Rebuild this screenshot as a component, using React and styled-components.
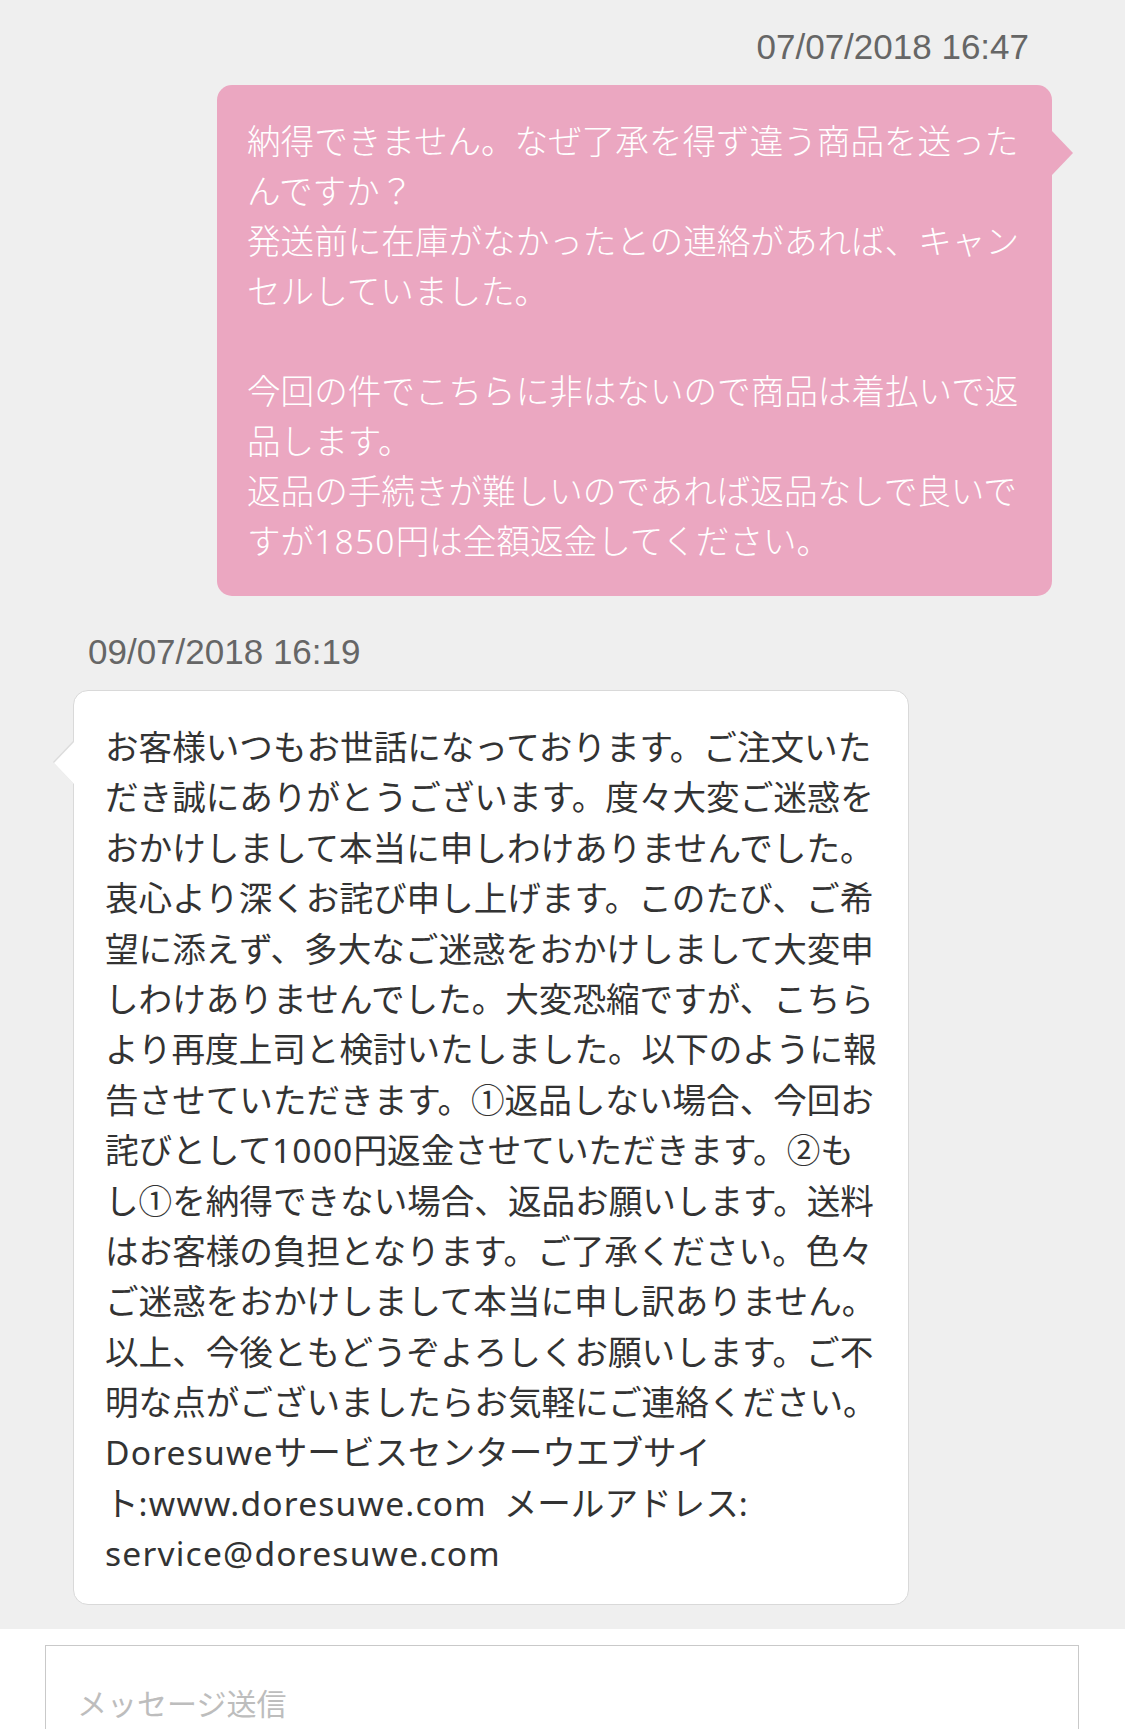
import styled, { createGlobalStyle } from "styled-components";

const GlobalStyle = createGlobalStyle`
  html, body {
    margin: 0;
    padding: 0;
    background: #efefef;
  }
  * {
    box-sizing: border-box;
  }
`;

const messages = [
  {
    out: true,
    time: "07/07/2018 16:47",
    lines: [
      "納得できません。なぜ了承を得ず違う商品を送った",
      "んですか？",
      "発送前に在庫がなかったとの連絡があれば、キャン",
      "セルしていました。",
      "",
      "今回の件でこちらに非はないので商品は着払いで返",
      "品します。",
      "返品の手続きが難しいのであれば返品なしで良いで",
      "すが1850円は全額返金してください。",
    ],
  },
  {
    out: false,
    time: "09/07/2018 16:19",
    lines: [
      "お客様いつもお世話になっております。ご注文いた",
      "だき誠にありがとうございます。度々大変ご迷惑を",
      "おかけしまして本当に申しわけありませんでした。",
      "衷心より深くお詫び申し上げます。このたび、ご希",
      "望に添えず、多大なご迷惑をおかけしまして大変申",
      "しわけありませんでした。大変恐縮ですが、こちら",
      "より再度上司と検討いたしました。以下のように報",
      "告させていただきます。①返品しない場合、今回お",
      "詫びとして1000円返金させていただきます。②も",
      "し①を納得できない場合、返品お願いします。送料",
      "はお客様の負担となります。ご了承ください。色々",
      "ご迷惑をおかけしまして本当に申し訳ありません。",
      "以上、今後ともどうぞよろしくお願いします。ご不",
      "明な点がございましたらお気軽にご連絡ください。",
      "Doresuweサービスセンターウエブサイ",
      "ト:www.doresuwe.com\u2002メールアドレス:",
      "service@doresuwe.com",
    ],
  },
];

// latin runs are set a little wider, like the phone's system font
const renderLine = (line) =>
  line.split(/([A-Za-z0-9@.:]+)/).map((part, i) =>
    /^[A-Za-z0-9@.:]+$/.test(part) ? <Latin key={i}>{part}</Latin> : part
  );

const App = () => {
  return (
    <Page>
      <GlobalStyle />
      <Thread>
        {messages.map((msg, idx) => (
          <Group key={idx} $out={msg.out} $first={idx === 0}>
            <Stamp $out={msg.out}>{msg.time}</Stamp>
            <Bubble $out={msg.out}>
              {msg.lines.map((line, i) => (
                <Line key={i} $out={msg.out}>
                  {line ? renderLine(line) : "\u00a0"}
                </Line>
              ))}
            </Bubble>
          </Group>
        ))}
      </Thread>
      <Footer>
        <Input placeholder="メッセージ送信" />
      </Footer>
    </Page>
  );
};

const Page = styled.div`
  height: 100vh;
  display: flex;
  flex-direction: column;
  overflow: hidden;
  font-family: "Noto Sans CJK JP", "Noto Sans", sans-serif;
`;

const Thread = styled.main`
  display: flex;
  flex-direction: column;
  padding: 27px 0 24px;
`;

const Group = styled.section`
  display: flex;
  flex-direction: column;
  align-items: ${({ $out }) => ($out ? "flex-end" : "flex-start")};
  padding: 0 73px;
  margin-top: ${({ $first }) => ($first ? "0" : "36px")};
`;

const Stamp = styled.div`
  font-family: "Liberation Sans", Arial, sans-serif;
  font-size: 35px;
  line-height: 40px;
  color: #666;
  margin-bottom: 18px;
  padding: ${({ $out }) => ($out ? "0 23px 0 0" : "0 0 0 15px")};
`;

const Bubble = styled.div`
  position: relative;
  width: ${({ $out }) => ($out ? "835px" : "836px")};
  font-size: 33.6px;
  font-weight: ${({ $out }) => ($out ? 300 : 400)};
  color: ${({ $out }) => ($out ? "#ffffff" : "#333333")};
  background: ${({ $out }) => ($out ? "#eba7c1" : "#ffffff")};
  border: ${({ $out }) => ($out ? "none" : "1px solid #d9d9d9")};
  border-radius: 15px;
  padding: ${({ $out }) => ($out ? "30px 20px 31px 30px" : "30px 20px 26px 31px")};

  &::before,
  &::after {
    content: "";
    position: absolute;
    width: 0;
    height: 0;
    border-top: 22px solid transparent;
    border-bottom: 22px solid transparent;
  }

  &::before {
    display: ${({ $out }) => ($out ? "none" : "block")};
    left: -21px;
    top: 49px;
    border-right: 21px solid #dcdcdc;
  }

  &::after {
    top: ${({ $out }) => ($out ? "46px" : "50px")};
    ${({ $out }) =>
      $out
        ? `right: -21px; border-left: 21px solid #eba7c1;`
        : `left: -20px; border-right: 21px solid #ffffff;`}
  }
`;

const Line = styled.div`
  white-space: pre;
  height: ${({ $out }) => ($out ? "50px" : "50.4px")};
  line-height: ${({ $out }) => ($out ? "50px" : "50.4px")};
`;

const Latin = styled.span`
  font-family: "Noto Sans", sans-serif;
  letter-spacing: 1.2px;
  line-height: 1;
`;

const Footer = styled.footer`
  flex: 1;
  background: #ffffff;
  padding: 16px 46px 0 45px;
  overflow: hidden;
`;

const Input = styled.input`
  display: block;
  width: 100%;
  height: 120px;
  border: 1px solid #c9c9c9;
  border-bottom: none;
  outline: none;
  background: #ffffff;
  padding: 0 0 6px 31px;
  font-family: "Noto Sans CJK JP", sans-serif;
  font-size: 30px;
  color: #333;

  &::placeholder {
    color: #bdbdbd;
  }
`;

export default App;
